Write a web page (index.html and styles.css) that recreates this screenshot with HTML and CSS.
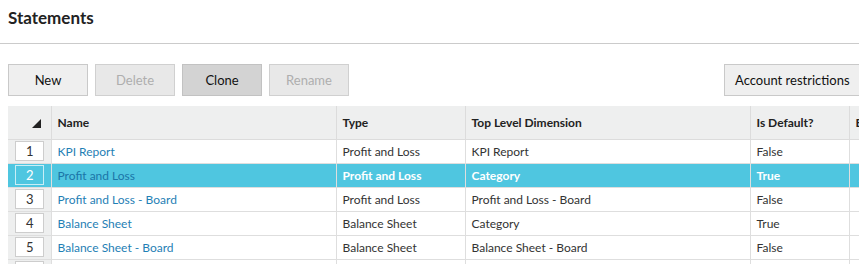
FILE: index.html
```html
<!DOCTYPE html>
<html lang="en">
<head>
  <meta charset="UTF-8" />
  <title>Statements</title>
  <link rel="stylesheet" href="styles.css">
</head>
<body>
  <div class="page-head">
    <h1>Statements</h1>
  </div>

  <div class="toolbar">
    <button class="btn">New</button>
    <button class="btn" disabled>Delete</button>
    <button class="btn active">Clone</button>
    <button class="btn" disabled>Rename</button>
    <span class="spacer"></span>
    <button class="btn wide">Account restrictions</button>
  </div>

  <table class="grid">
    <colgroup>
      <col class="c-num">
      <col class="c-name">
      <col class="c-type">
      <col class="c-dim">
      <col class="c-def">
      <col class="c-more">
    </colgroup>
    <thead>
      <tr>
        <th class="num"><span class="sort"></span></th>
        <th>Name</th>
        <th>Type</th>
        <th>Top Level Dimension</th>
        <th>Is Default?</th>
        <th>Enabled</th>
      </tr>
    </thead>
    <tbody>
      <tr>
        <td class="num"><span class="idx">1</span></td>
        <td><a href="#">KPI Report</a></td>
        <td>Profit and Loss</td>
        <td>KPI Report</td>
        <td>False</td>
        <td></td>
      </tr>
      <tr class="selected">
        <td class="num"><span class="idx">2</span></td>
        <td><a href="#">Profit and Loss</a></td>
        <td>Profit and Loss</td>
        <td>Category</td>
        <td>True</td>
        <td></td>
      </tr>
      <tr>
        <td class="num"><span class="idx">3</span></td>
        <td><a href="#">Profit and Loss - Board</a></td>
        <td>Profit and Loss</td>
        <td>Profit and Loss - Board</td>
        <td>False</td>
        <td></td>
      </tr>
      <tr>
        <td class="num"><span class="idx">4</span></td>
        <td><a href="#">Balance Sheet</a></td>
        <td>Balance Sheet</td>
        <td>Category</td>
        <td>True</td>
        <td></td>
      </tr>
      <tr>
        <td class="num"><span class="idx">5</span></td>
        <td><a href="#">Balance Sheet - Board</a></td>
        <td>Balance Sheet</td>
        <td>Balance Sheet - Board</td>
        <td>False</td>
        <td></td>
      </tr>
      <tr>
        <td class="num"><span class="idx">6</span></td>
        <td><a href="#">Cash Flow</a></td>
        <td>Cash Flow</td>
        <td>Category</td>
        <td>False</td>
        <td></td>
      </tr>
    </tbody>
  </table>
</body>
</html>
```

FILE: styles.css
```css
* {
  margin: 0;
  padding: 0;
  box-sizing: border-box;
}
body {
  font-family: 'Lato', 'Liberation Sans', sans-serif;
  font-size: 12px;
  color: #333;
  background: #fff;
  width: 900px;
  overflow: hidden;
}
.page-head {
  height: 44px;
  border-bottom: 1px solid #cbcbcb;
  padding: 7px 8px 0;
}
.page-head h1 {
  font-size: 17px;
  line-height: 21px;
  font-weight: 700;
  color: #222;
}
.toolbar {
  display: flex;
  gap: 7px;
  margin: 20px 0 10px 8px;
}
.spacer {
  width: 361px;
}
.btn {
  width: 80px;
  height: 32px;
  font-family: inherit;
  font-size: 13px;
  color: #111;
  background: #efefef;
  border: 1px solid #c9c9c9;
}
.btn:disabled {
  color: #aeaeae;
  background: #e8e8e8;
  border-color: #d0d0d0;
}
.btn.active {
  background: #d3d3d3;
  border-color: #c2c2c2;
}
.btn.wide {
  width: auto;
  padding: 0 11px 0 10px;
}
.grid {
  margin-left: 8px;
  border-collapse: collapse;
  table-layout: fixed;
  width: 900px;
}
.c-num { width: 43px; }
.c-name { width: 285px; }
.c-type { width: 129px; }
.c-dim { width: 285px; }
.c-def { width: 99px; }
.grid th {
  height: 33px;
  background: #eeefef;
  text-align: left;
  font-weight: 700;
  color: #222;
  padding: 0 6px;
  border-left: 1px solid #dcdcdc;
  border-bottom: 1px solid #dcdcdc;
  white-space: nowrap;
  overflow: hidden;
}
.grid th:first-child {
  border-left: none;
}
.grid td {
  height: 24px;
  padding: 0 6px;
  border-left: 1px solid #dedede;
  border-bottom: 1px solid #dedede;
  white-space: nowrap;
  overflow: hidden;
}
.grid td:first-child {
  border-left: none;
}
.grid .num {
  background: #eeefef;
  text-align: center;
  padding: 0;
}
.grid th.num {
  vertical-align: bottom;
  padding: 0 10px 8px 0;
  text-align: right;
}
.sort {
  display: inline-block;
  width: 0;
  height: 0;
  border-left: 9px solid transparent;
  border-bottom: 9px solid #222;
}
.idx {
  display: inline-block;
  width: 29px;
  height: 20px;
  line-height: 18px;
  font-size: 13px;
  background: #fff;
  border: 1px solid #cdcdcd;
  color: #333;
  vertical-align: middle;
  margin-left: 1px;
}
.grid a {
  color: #1f80b5;
  text-decoration: none;
}
.grid tr.selected td {
  background: #4fc6e0;
  color: #fff;
  font-weight: 700;
}
.grid tr.selected a {
  color: #1b75a8;
  font-weight: 400;
}
.grid tr.selected .idx {
  background: #4fc6e0;
  border-color: #c9eef6;
  color: #fff;
  font-weight: 400;
}
```
